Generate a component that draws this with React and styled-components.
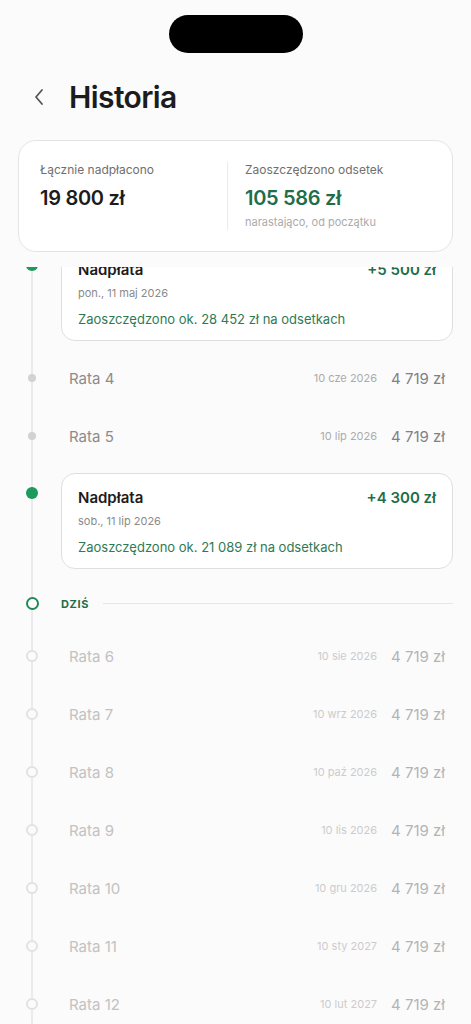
import React from 'react';
import styled, { createGlobalStyle } from 'styled-components';

const GlobalStyle = createGlobalStyle`
  html, body {
    margin: 0;
    padding: 0;
    background: #fbfbfb;
    font-family: Inter, "Noto Sans", "Liberation Sans", sans-serif;
  }
`;

const Screen = styled.div`
  width: 471px;
  height: 1024px;
  display: flex;
  flex-direction: column;
  overflow: hidden;
  background: #fbfbfb;
`;

const Notch = styled.div`
  width: 134px;
  height: 38px;
  margin: 15px auto 0;
  border-radius: 19px;
  background: #000;
`;

const Header = styled.div`
  display: flex;
  align-items: center;
  height: 40px;
  margin-top: 24px;
  padding-left: 30px;
`;

const BackButton = styled.button`
  width: 18px;
  height: 24px;
  padding: 0;
  border: 0;
  background: none;
  display: flex;
  align-items: center;
  justify-content: center;
  margin-right: 21px;
`;

const Title = styled.h1`
  margin: 0;
  font-size: 30px;
  font-weight: 600;
  color: #1c1c1c;
  letter-spacing: -0.6px;
`;

const SummaryCard = styled.div`
  margin: 23px 18px 0;
  height: 112px;
  box-sizing: border-box;
  border: 1px solid #e4e4e4;
  border-radius: 18px;
  background: #fff;
  display: grid;
  grid-template-columns: 208px 1px 1fr;
  padding-top: 21px;
`;

const SummaryCol = styled.div`
  padding-left: ${p => p.$pad}px;
`;

const Divider = styled.div`
  width: 1px;
  height: 68px;
  background: #ebebeb;
`;

const SummaryLabel = styled.div`
  font-size: 12px;
  line-height: 16px;
  color: #6f6f6f;
`;

const SummaryValue = styled.div`
  margin-top: 8px;
  font-size: 20px;
  line-height: 24px;
  font-weight: 600;
  letter-spacing: -0.3px;
  color: ${p => (p.$green ? '#1f6e4a' : '#1c1c1c')};
`;

const SummaryNote = styled.div`
  margin-top: 5px;
  font-size: 11px;
  line-height: 15px;
  color: #ababab;
`;

const Timeline = styled.div`
  position: relative;
  flex: 1;
  margin-top: 15px;
  overflow: hidden;
  padding: 0 18px;

  &::before {
    content: '';
    position: absolute;
    left: 31px;
    top: 0;
    bottom: 0;
    width: 2px;
    background: #ebebeb;
  }
`;

const Item = styled.div`
  position: relative;
  display: flex;
  align-items: ${p => (p.$top ? 'flex-start' : 'center')};
  height: ${p => (p.$h ? `${p.$h}px` : 'auto')};
  margin: ${p => p.$m || '0'};
`;

const MarkerCol = styled.div`
  width: 28px;
  flex: none;
  display: flex;
  justify-content: center;
  margin-right: 15px;
  padding-top: ${p => p.$pt || 0}px;
`;

const Dot = styled.div`
  position: relative;
  z-index: 1;
  box-sizing: border-box;
  width: ${p => p.$size}px;
  height: ${p => p.$size}px;
  border-radius: 50%;
  background: ${p => p.$fill};
  border: ${p => (p.$ring ? `${p.$bw || 2}px solid ${p.$ring}` : 'none')};
`;

const PaymentCard = styled.div`
  flex: 1;
  box-sizing: border-box;
  height: 96px;
  padding: 14px 16px 0;
  border: 1px solid #dfdfdf;
  border-radius: 14px;
  background: #fff;
`;

const CardTop = styled.div`
  display: flex;
  justify-content: space-between;
  font-size: 15px;
  line-height: 20px;
  font-weight: 600;
`;

const CardTitle = styled.span`
  color: #1c1c1c;
`;

const CardAmount = styled.span`
  color: #1f6e4a;
`;

const CardDate = styled.div`
  margin-top: 5px;
  font-size: 11px;
  line-height: 16px;
  color: #8a8a8a;
`;

const CardSaving = styled.div`
  margin-top: 9px;
  font-size: 13px;
  line-height: 18px;
  color: #2f7a55;
`;

const RowBody = styled.div`
  flex: 1;
  display: flex;
  align-items: center;
  padding: 0 8px;
`;

const RowName = styled.span`
  flex: 1;
  font-size: 15px;
  color: ${p => (p.$future ? '#c2c2c2' : '#8c8c8c')};
`;

const RowDate = styled.span`
  font-size: 11px;
  color: ${p => (p.$future ? '#cccccc' : '#ababab')};
  margin-right: 14px;
`;

const RowAmount = styled.span`
  font-size: 15px;
  color: ${p => (p.$future ? '#b4b4b4' : '#818181')};
`;

const TodayLabel = styled.span`
  font-size: 11px;
  font-weight: 700;
  letter-spacing: 0.6px;
  color: #1f6e4a;
  margin-right: 14px;
`;

const TodayLine = styled.div`
  flex: 1;
  height: 1px;
  background: #e6e6e6;
`;

const ChevronLeft = () => (
  <svg width="12" height="18" viewBox="0 0 12 18" fill="none">
    <polyline points="9,2 3,9 9,16" stroke="#555" strokeWidth="1.8" strokeLinecap="round" strokeLinejoin="round" />
  </svg>
);

const pastRows = [
  { name: 'Rata 4', date: '10 cze 2026' },
  { name: 'Rata 5', date: '10 lip 2026' },
];

const futureRows = [
  { name: 'Rata 6', date: '10 sie 2026' },
  { name: 'Rata 7', date: '10 wrz 2026' },
  { name: 'Rata 8', date: '10 paź 2026' },
  { name: 'Rata 9', date: '10 lis 2026' },
  { name: 'Rata 10', date: '10 gru 2026' },
  { name: 'Rata 11', date: '10 sty 2027' },
  { name: 'Rata 12', date: '10 lut 2027' },
];

const OverpaymentItem = ({ amount, date, saving, margin }) => (
  <Item $top $m={margin}>
    <MarkerCol $pt={14}>
      <Dot $size={12} $fill="#1a9a5b" />
    </MarkerCol>
    <PaymentCard>
      <CardTop>
        <CardTitle>Nadpłata</CardTitle>
        <CardAmount>{amount}</CardAmount>
      </CardTop>
      <CardDate>{date}</CardDate>
      <CardSaving>Zaoszczędzono ok. {saving} zł na odsetkach</CardSaving>
    </PaymentCard>
  </Item>
);

const RateRow = ({ row, future }) => (
  <Item $h={58}>
    <MarkerCol>
      {future ? (
        <Dot $size={12} $fill="#fbfbfb" $ring="#e2e2e2" />
      ) : (
        <Dot $size={8} $fill="#d2d2d2" />
      )}
    </MarkerCol>
    <RowBody>
      <RowName $future={future}>{row.name}</RowName>
      <RowDate $future={future}>{row.date}</RowDate>
      <RowAmount $future={future}>4 719 zł</RowAmount>
    </RowBody>
  </Item>
);

export default function App() {
  return (
    <Screen>
      <GlobalStyle />
      <Notch />
      <Header>
        <BackButton aria-label="Wstecz">
          <ChevronLeft />
        </BackButton>
        <Title>Historia</Title>
      </Header>

      <SummaryCard>
        <SummaryCol $pad={21}>
          <SummaryLabel>Łącznie nadpłacono</SummaryLabel>
          <SummaryValue>19 800 zł</SummaryValue>
        </SummaryCol>
        <Divider />
        <SummaryCol $pad={17}>
          <SummaryLabel>Zaoszczędzono odsetek</SummaryLabel>
          <SummaryValue $green>105 586 zł</SummaryValue>
          <SummaryNote>narastająco, od początku</SummaryNote>
        </SummaryCol>
      </SummaryCard>

      <Timeline>
        <OverpaymentItem amount="+5 500 zł" date="pon., 11 maj 2026" saving="28 452" margin="-22px 0 8px" />
        {pastRows.map(row => (
          <RateRow key={row.name} row={row} />
        ))}
        <OverpaymentItem amount="+4 300 zł" date="sob., 11 lip 2026" saving="21 089" margin="8px 0 0" />
        <Item $h={47} $m="11px 0 0">
          <MarkerCol>
            <Dot $size={13} $fill="#fff" $ring="#1f8a57" $bw={2.5} />
          </MarkerCol>
          <TodayLabel>DZIŚ</TodayLabel>
          <TodayLine />
        </Item>
        {futureRows.map(row => (
          <RateRow key={row.name} row={row} future />
        ))}
      </Timeline>
    </Screen>
  );
}
